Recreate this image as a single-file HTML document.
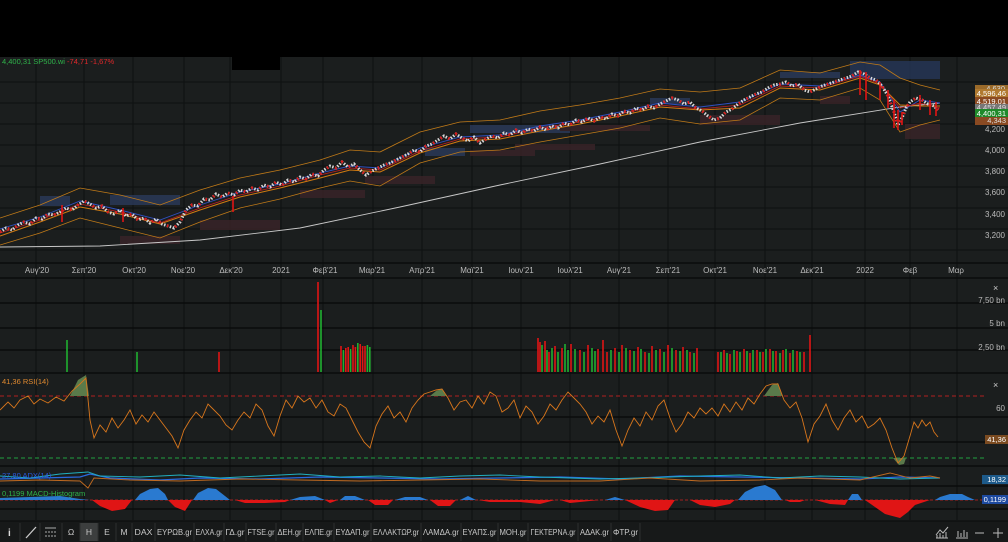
<!DOCTYPE html>
<html><head><meta charset="utf-8">
<style>
html,body{margin:0;padding:0;background:#000;}
body{width:1008px;height:542px;overflow:hidden;font-family:"Liberation Sans","DejaVu Sans",sans-serif;}
svg{display:block}
.ax{font-size:8px;fill:#bbb}
.tb{font-size:8.5px;fill:#c8c8c8}
</style></head><body>
<svg width="1008" height="542" viewBox="0 0 1008 542" xmlns="http://www.w3.org/2000/svg" font-family="Liberation Sans, DejaVu Sans, sans-serif">
<defs>
<path id="pp" d="M0 232 L6 228 L12 230 L18 225 L24 222 L30 224 L36 218 L42 219 L48 214 L54 215 L60 212 L66 208 L72 210 L78 205 L84 201 L90 204 L96 208 L102 206 L108 212 L114 214 L120 210 L126 216 L132 214 L138 220 L144 218 L150 223 L156 219 L162 224 L168 226 L174 228 L180 222 L186 210 L192 205 L198 206 L204 199 L210 200 L216 194 L222 197 L228 193 L234 195 L240 190 L246 192 L252 188 L258 190 L264 185 L270 187 L276 182 L282 185 L288 180 L294 182 L300 177 L306 179 L312 174 L318 176 L324 170 L330 166 L336 168 L342 162 L348 167 L354 164 L360 170 L366 175 L372 171 L378 168 L384 165 L390 163 L396 160 L402 157 L408 154 L414 150 L420 152 L426 146 L432 144 L438 140 L444 136 L450 139 L456 134 L462 138 L468 141 L474 137 L480 143 L486 139 L492 136 L498 138 L504 133 L510 135 L516 130 L522 133 L528 129 L534 131 L540 127 L546 130 L552 126 L558 128 L564 123 L570 125 L576 120 L582 122 L588 118 L594 121 L600 117 L606 119 L612 114 L618 116 L624 111 L630 113 L636 108 L642 110 L648 106 L654 108 L660 104 L666 101 L672 98 L678 100 L684 104 L690 102 L696 108 L702 111 L708 116 L714 120 L720 118 L726 112 L732 109 L738 104 L744 100 L750 97 L756 94 L762 92 L768 88 L774 85 L780 84 L786 82 L792 86 L798 84 L804 90 L810 92 L816 89 L822 86 L828 84 L834 82 L840 80 L846 78 L852 76 L858 72 L864 74 L870 78 L876 80 L882 86 L888 96 L894 112 L898 125 L902 118 L906 108 L910 102 L916 98 L922 100 L928 104 L934 106 L938 110" fill="none"/>
</defs>
<rect x="0" y="0" width="1008" height="542" fill="#1b1e1e"/>
<rect x="0" y="0" width="1008" height="57" fill="#000"/>
<rect x="232" y="57" width="48" height="13" fill="#000"/>
<g stroke="#0e1010" stroke-width="1">
<path d="M36 57V520M84 57V520M133 57V520M184 57V520M230 57V520M281 57V520M323 57V520M373 57V520M422 57V520M472 57V520M521 57V520M570 57V520M619 57V520M668 57V520M715 57V520M765 57V520M812 57V520M865 57V520M910 57V520M957 57V520"/>
<path d="M0 82H1008M0 103H1008M0 124H1008M0 145H1008M0 166H1008M0 187H1008M0 208H1008M0 229H1008M0 250H1008"/>
</g>
<g stroke="#0a0b0b" stroke-width="1.5"><path d="M0 263H1008M0 278H1008M0 303H1008M0 328H1008M0 350H1008M0 373H1008M0 417H1008M0 442H1008M0 466H1008M0 486H1008M0 509H1008"/></g>
<g opacity="0.8">
<rect x="40" y="196" width="30" height="10" fill="#2a3a5a"/><rect x="110" y="195" width="70" height="10" fill="#2a3a5a"/>
<rect x="120" y="236" width="60" height="8" fill="#3a2428"/><rect x="200" y="220" width="80" height="10" fill="#3a2428"/>
<rect x="300" y="190" width="65" height="8" fill="#3a2428"/><rect x="365" y="176" width="70" height="8" fill="#3a2428"/>
<rect x="425" y="148" width="40" height="8" fill="#2a3a5a"/><rect x="470" y="125" width="100" height="8" fill="#2a3a5a"/>
<rect x="470" y="150" width="65" height="6" fill="#3a2428"/><rect x="515" y="144" width="80" height="6" fill="#3a2428"/>
<rect x="560" y="125" width="90" height="6" fill="#3a2428"/><rect x="650" y="98" width="40" height="6" fill="#2a3a5a"/>
<rect x="700" y="115" width="80" height="10" fill="#3a2428"/><rect x="780" y="72" width="60" height="6" fill="#2a3a5a"/>
<rect x="820" y="96" width="30" height="8" fill="#3a2428"/><rect x="850" y="61" width="90" height="18" fill="#263658"/>
<rect x="905" y="124" width="35" height="15" fill="#3a2428"/>
</g>
<path d="M0 247 L100 246 L200 240 L300 228 L400 207 L500 185 L600 164 L700 142 L800 123 L900 107 L940 103" stroke="#c8c8c8" stroke-width="0.9" fill="none"/>
<path d="M0 218 L40 205 L80 188 L120 195 L160 205 L200 190 L240 178 L280 170 L320 160 L350 150 L380 152 L420 132 L460 122 L500 120 L540 111 L580 105 L620 98 L660 89 L700 92 L740 88 L780 70 L820 73 L860 62 L880 65 L900 78 L920 85 L940 90" stroke="#c07a18" stroke-width="0.8" fill="none"/>
<path d="M0 245 L40 233 L80 218 L120 228 L160 238 L200 222 L240 208 L280 199 L320 188 L350 181 L380 186 L420 163 L460 152 L500 150 L540 142 L580 135 L620 128 L660 118 L700 124 L740 120 L780 98 L820 100 L860 88 L880 100 L900 132 L920 125 L940 120" stroke="#c07a18" stroke-width="0.8" fill="none"/>
<path d="M0 236 L40 222 L80 207 L120 214 L160 224 L200 210 L240 197 L280 188 L320 178 L350 170 L380 172 L420 153 L460 141 L500 139 L540 131 L580 124 L620 116 L660 107 L700 110 L740 108 L780 88 L820 90 L860 78 L880 85 L900 105 L920 106 L940 106" stroke="#d07a10" stroke-width="1" fill="none"/>
<path d="M0 229 L40 217 L80 201 L120 210 L160 220 L200 205 L240 192 L280 184 L320 173 L350 166 L380 168 L420 148 L460 137 L500 135 L540 126 L580 120 L620 112 L660 103 L700 107 L740 102 L780 84 L820 86 L860 75 L880 82 L900 112 L920 100 L940 103" stroke="#3050c0" stroke-width="0.9" fill="none"/>
<path d="M0 233 L40 220 L80 204 L120 212 L160 223 L200 208 L240 195 L280 186 L320 175 L350 168 L380 170 L420 151 L460 139 L500 137 L540 128 L580 122 L620 114 L660 105 L700 109 L740 105 L780 86 L820 88 L860 76 L880 84 L900 108 L920 103 L940 108" stroke="#c02020" stroke-width="0.8" fill="none"/>
<use href="#pp" stroke="#d8d8d8" stroke-width="3" stroke-dasharray="1.5 1.5"/>
<use href="#pp" stroke="#e01515" stroke-width="3" stroke-dasharray="1.5 7.5"/>
<path d="M860 70V95M866 72V100M880 82V100M888 90V108M894 100V128M898 110V130M902 112V125M920 95V110M930 100V115M936 102V116M233 196V212M62 205V222M123 208V222" stroke="#e01515" stroke-width="1.6"/>
<text x="2" y="64" font-size="7.5" fill="#2fb34a">4,400,31 SP500.wi <tspan fill="#e0282a">-74,71 -1,67%</tspan></text>
<g class="ax" text-anchor="end">
<text x="1005" y="132">4,200</text><text x="1005" y="153">4,000</text><text x="1005" y="174">3,800</text>
<text x="1005" y="195">3,600</text><text x="1005" y="217">3,400</text><text x="1005" y="238">3,200</text>
</g>
<rect x="975" y="85" width="33" height="8" fill="#9a6a2a"/><text x="1005" y="91" font-size="7.5" fill="#ddd" text-anchor="end">4,630</text>
<rect x="975" y="89" width="33" height="9" fill="#b07a30"/><text x="1006" y="96" font-size="7.5" fill="#fff" text-anchor="end">4,596,46</text>
<rect x="975" y="97" width="33" height="9" fill="#8a4a22"/><text x="1006" y="104" font-size="7.5" fill="#fff" text-anchor="end">4,519,01</text>
<rect x="975" y="104" width="33" height="8" fill="#777"/><text x="1006" y="110" font-size="7.5" fill="#ddd" text-anchor="end">4,457,49</text>
<rect x="975" y="109" width="33" height="9" fill="#1e8a2a"/><text x="1006" y="116" font-size="7.5" fill="#fff" text-anchor="end">4,400,31</text>
<rect x="975" y="117" width="33" height="8" fill="#8a4a22"/><text x="1006" y="123" font-size="7.5" fill="#ddd" text-anchor="end">4,343</text>
<g class="ax" text-anchor="middle">
<text x="37" y="273">Αυγ'20</text><text x="84" y="273">Σεπ'20</text><text x="134" y="273">Οκτ'20</text><text x="183" y="273">Νοε'20</text><text x="231" y="273">Δεκ'20</text><text x="281" y="273">2021</text><text x="325" y="273">Φεβ'21</text><text x="372" y="273">Μαρ'21</text><text x="422" y="273">Απρ'21</text><text x="472" y="273">Μαϊ'21</text><text x="521" y="273">Ιουν'21</text><text x="570" y="273">Ιουλ'21</text><text x="619" y="273">Αυγ'21</text><text x="668" y="273">Σεπ'21</text><text x="715" y="273">Οκτ'21</text><text x="765" y="273">Νοε'21</text><text x="812" y="273">Δεκ'21</text><text x="865" y="273">2022</text><text x="910" y="273">Φεβ</text><text x="956" y="273">Μαρ</text>
</g>
<g stroke-width="1.6">
<path stroke="#e01515" d="M318 372V282M341 372V346M345.8 372V348M348.2 372V347M353 372V345M355.4 372V347M360.2 372V344M362.6 372V346M365 372V346M219 372V352M538 372V338M540 372V342M545 372V341M549 372V352M555 372V346M562 372V348M571 372V344M580 372V350M588 372V345M598 372V349M603 372V340M607 372V352M615 372V348M622 372V345M630 372V350M638 372V347M645 372V352M652 372V346M660 372V349M668 372V345M676 372V350M683 372V347M690 372V352M697 372V348M718 372V352M724 372V350M730 372V354M737 372V351M744 372V349M750 372V353M757 372V350M763 372V352M770 372V349M776 372V351M783 372V350M790 372V353M797 372V351M804 372V352M810 372V335"/>
<path stroke="#20b030" d="M67 372V340M137 372V352M321 372V310M343.4 372V350M350.6 372V349M357.8 372V343M367.4 372V345M369.8 372V347M542 372V345M547 372V350M552 372V348M558 372V352M565 372V344M568 372V350M575 372V349M584 372V352M592 372V348M595 372V351M611 372V350M619 372V352M626 372V348M634 372V351M641 372V349M649 372V353M656 372V350M664 372V352M672 372V348M680 372V351M687 372V350M694 372V353M721 372V352M727 372V353M734 372V350M740 372V352M747 372V351M753 372V350M760 372V352M766 372V349M773 372V351M780 372V353M786 372V349M793 372V350M800 372V352"/>
</g>
<g class="ax" text-anchor="end"><text x="1005" y="303">7,50 bn</text><text x="1005" y="326">5 bn</text><text x="1005" y="350">2,50 bn</text><text x="1005" y="411">60</text></g>
<text x="993" y="291" font-size="9" fill="#ccc">×</text>
<text x="993" y="388" font-size="9" fill="#ccc">×</text>
<path d="M0 396H985" stroke="#b02020" stroke-dasharray="4 3"/>
<path d="M0 458H985" stroke="#20a040" stroke-dasharray="4 3"/>
<path d="M70 396 L78 380 L86 375 L89 396Z M430 396 L436 391 L442 389 L446 396Z M764 396 L772 385 L778 383 L782 396Z M893 458 L899 465 L904 464 L906 458Z" fill="#5a7a4a"/>
<path d="M0 410 L8 402 L14 408 L20 400 L28 396 L34 404 L40 399 L48 403 L56 397 L64 401 L72 391 L80 384 L86 378 L90 420 L94 438 L100 425 L106 432 L112 418 L118 428 L124 420 L130 410 L136 424 L142 415 L148 422 L154 412 L160 420 L166 428 L172 436 L178 448 L184 430 L190 420 L196 412 L202 418 L208 404 L214 410 L220 416 L226 425 L232 430 L238 420 L244 412 L250 418 L256 404 L262 410 L268 426 L274 436 L280 416 L286 400 L292 408 L298 396 L304 402 L310 398 L316 408 L322 400 L328 412 L334 416 L340 404 L346 408 L352 420 L358 432 L364 442 L370 448 L376 426 L382 414 L388 406 L394 418 L400 412 L406 422 L412 408 L418 400 L424 394 L430 392 L436 390 L442 389 L448 398 L454 410 L460 402 L466 400 L472 408 L478 396 L484 404 L490 392 L496 396 L502 412 L508 408 L514 400 L520 418 L526 406 L532 412 L538 424 L544 416 L550 404 L556 410 L562 400 L568 392 L574 398 L580 404 L586 412 L592 424 L598 416 L604 422 L610 410 L616 430 L622 446 L628 430 L634 418 L640 426 L646 412 L652 420 L658 406 L664 400 L670 418 L676 432 L682 424 L688 412 L694 418 L700 408 L706 414 L712 408 L718 416 L724 404 L730 412 L736 402 L742 410 L748 398 L754 404 L760 394 L766 386 L772 384 L778 384 L784 400 L790 408 L796 402 L802 418 L808 442 L814 424 L820 416 L826 404 L832 420 L838 430 L844 418 L850 410 L856 422 L862 416 L868 428 L874 424 L880 418 L886 430 L892 448 L898 463 L904 456 L910 436 L914 422 L918 428 L922 420 L926 426 L930 422 L934 432 L938 437" stroke="#d8761c" stroke-width="0.9" fill="none"/>
<text x="2" y="384" font-size="7.5" fill="#e08a30">41,36 RSI(14)</text>
<rect x="985" y="435" width="23" height="9" fill="#7a4a20"/><text x="1006" y="442" font-size="7.5" fill="#fff" text-anchor="end">41,36</text>
<path d="M0 479 L40 478 L80 477 L90 474 L110 478 L160 480 L200 478 L260 479 L320 477 L380 478 L440 479 L500 478 L560 477 L620 479 L680 476 L740 477 L800 478 L860 479 L900 477 L940 478" stroke="#2a6ae0" stroke-width="1.2" fill="none"/>
<path d="M0 476 L30 478 L60 474 L88 472 L100 476 L140 477 L180 475 L220 478 L260 476 L300 474 L340 477 L380 476 L420 478 L460 476 L500 475 L540 477 L600 479 L640 478 L700 476 L740 475 L780 478 L820 476 L860 477 L900 479 L940 478" stroke="#20b0c0" stroke-width="0.9" fill="none"/>
<path d="M0 481 L40 480 L80 481 L88 488 L94 478 L130 480 L180 481 L240 479 L300 480 L360 481 L420 480 L480 479 L540 481 L600 481 L650 478 L700 481 L760 480 L800 478 L860 480 L890 473 L910 478 L930 476 L940 478" stroke="#c06a20" stroke-width="0.9" fill="none"/>
<text x="2" y="478" font-size="7.5" fill="#2a5ae0">27,80 ADX(14)</text>
<rect x="982" y="475" width="26" height="9" fill="#1d5a8a"/><text x="1006" y="482" font-size="7.5" fill="#fff" text-anchor="end">18,32</text>
<path d="M0 500H985" stroke="#a02020" stroke-dasharray="3 2"/>
<path fill="#2a7ad0" d="M0 500 L0 498 L30 497 L60 496 L80 499 L90 500Z M135 500 L140 494 L150 489 L158 488 L165 494 L168 500Z M193 500 L198 493 L208 488 L216 489 L225 496 L230 500Z M290 500 L300 497 L315 496 L325 500Z M340 500 L345 496 L355 496 L365 500Z M395 500 L405 497 L420 497 L428 500Z M460 500 L468 496 L476 500Z M738 500 L745 492 L755 487 L765 485 L775 490 L782 500Z M848 500 L852 494 L858 494 L862 500Z M935 500 L940 497 L950 494 L962 494 L968 497 L975 500Z M605 500 L615 497 L625 500Z"/>
<path fill="#e01515" d="M92 500 L100 506 L112 511 L125 509 L132 500Z M168 500 L175 507 L185 511 L192 500Z M235 500 L245 503 L265 503 L285 502 L290 500Z M325 500 L330 503 L338 500Z M368 500 L375 505 L388 505 L393 500Z M430 500 L438 506 L450 506 L456 500Z M478 500 L490 502 L520 502 L540 504 L555 500Z M560 500 L570 503 L580 502 L600 500Z M625 500 L640 507 L655 511 L668 510 L675 500Z M690 500 L700 505 L715 507 L730 504 L735 500Z M785 500 L790 502 L800 502 L805 500Z M815 500 L830 504 L845 505 L848 500Z M865 500 L875 507 L885 514 L900 518 L908 512 L915 505 L930 500Z"/>
<text x="2" y="496" font-size="7.5" fill="#2fb34a">0,1199 MACD-Histogram</text>
<rect x="982" y="495" width="26" height="9" fill="#1d4aa0"/><text x="1006" y="502" font-size="7.5" fill="#fff" text-anchor="end">0,1199</text>
<rect x="0" y="521" width="1008" height="21" fill="#171919"/>
<path d="M0 521H1008" stroke="#0a0a0a"/>
<rect x="80" y="523" width="18" height="18" fill="#3c3e3e"/>
<path stroke="#2c2e2e" d="M20 523V541M40 523V541M62 523V541M80 523V541M98 523V541M116 523V541M132 523V541M155 523V541M194 523V541M224 523V541M246 523V541M276 523V541M303 523V541M334 523V541M371 523V541M421 523V541M461 523V541M498 523V541M528 523V541M578 523V541M611 523V541M640 523V541"/>
<text x="8" y="536" font-size="10" fill="#ddd" font-weight="bold">i</text>
<line x1="26" y1="538" x2="36" y2="527" stroke="#ccc" stroke-width="1.3"/>
<g stroke="#aaa" stroke-width="1"><line x1="45" y1="528" x2="56" y2="528"/><line x1="45" y1="532" x2="56" y2="532" stroke-dasharray="2 1"/><line x1="45" y1="536" x2="56" y2="536" stroke-dasharray="2 1"/></g>
<g class="tb" text-anchor="middle"><text x="71" y="535">Ω</text><text x="89" y="535">Η</text><text x="107" y="535">Ε</text><text x="124" y="535">Μ</text>
<text x="143.5" y="535" textLength="18" lengthAdjust="spacingAndGlyphs">DAX</text>
<text x="174.5" y="535" textLength="35" lengthAdjust="spacingAndGlyphs">ΕΥΡΩΒ.gr</text>
<text x="209" y="535" textLength="27" lengthAdjust="spacingAndGlyphs">ΕΛΧΑ.gr</text>
<text x="235" y="535" textLength="19" lengthAdjust="spacingAndGlyphs">ΓΔ.gr</text>
<text x="261" y="535" textLength="27" lengthAdjust="spacingAndGlyphs">FTSE.gr</text>
<text x="289.5" y="535" textLength="24" lengthAdjust="spacingAndGlyphs">ΔΕΗ.gr</text>
<text x="318.5" y="535" textLength="28" lengthAdjust="spacingAndGlyphs">ΕΛΠΕ.gr</text>
<text x="352.5" y="535" textLength="34" lengthAdjust="spacingAndGlyphs">ΕΥΔΑΠ.gr</text>
<text x="396" y="535" textLength="46" lengthAdjust="spacingAndGlyphs">ΕΛΛΑΚΤΩΡ.gr</text>
<text x="441" y="535" textLength="36" lengthAdjust="spacingAndGlyphs">ΛΑΜΔΑ.gr</text>
<text x="479.5" y="535" textLength="34" lengthAdjust="spacingAndGlyphs">ΕΥΑΠΣ.gr</text>
<text x="513" y="535" textLength="27" lengthAdjust="spacingAndGlyphs">ΜΟΗ.gr</text>
<text x="553" y="535" textLength="45" lengthAdjust="spacingAndGlyphs">ΓΕΚΤΕΡΝΑ.gr</text>
<text x="594.5" y="535" textLength="29" lengthAdjust="spacingAndGlyphs">ΑΔΑΚ.gr</text>
<text x="625.5" y="535" textLength="25" lengthAdjust="spacingAndGlyphs">ΦΤΡ.gr</text></g>
<g stroke="#bbb" stroke-width="1" fill="none"><path d="M936 535 L940 530 L943 533 L948 527"/><path d="M936 538h12M937 538v-3M940 538v-5M943 538v-3M946 538v-6"/><path d="M956 538h12M958 537v-6M961 537v-4M964 537v-7M967 537v-5"/><path d="M975 533h9"/><path d="M993 533h10M998 528v10"/></g>
</svg>
</body></html>
